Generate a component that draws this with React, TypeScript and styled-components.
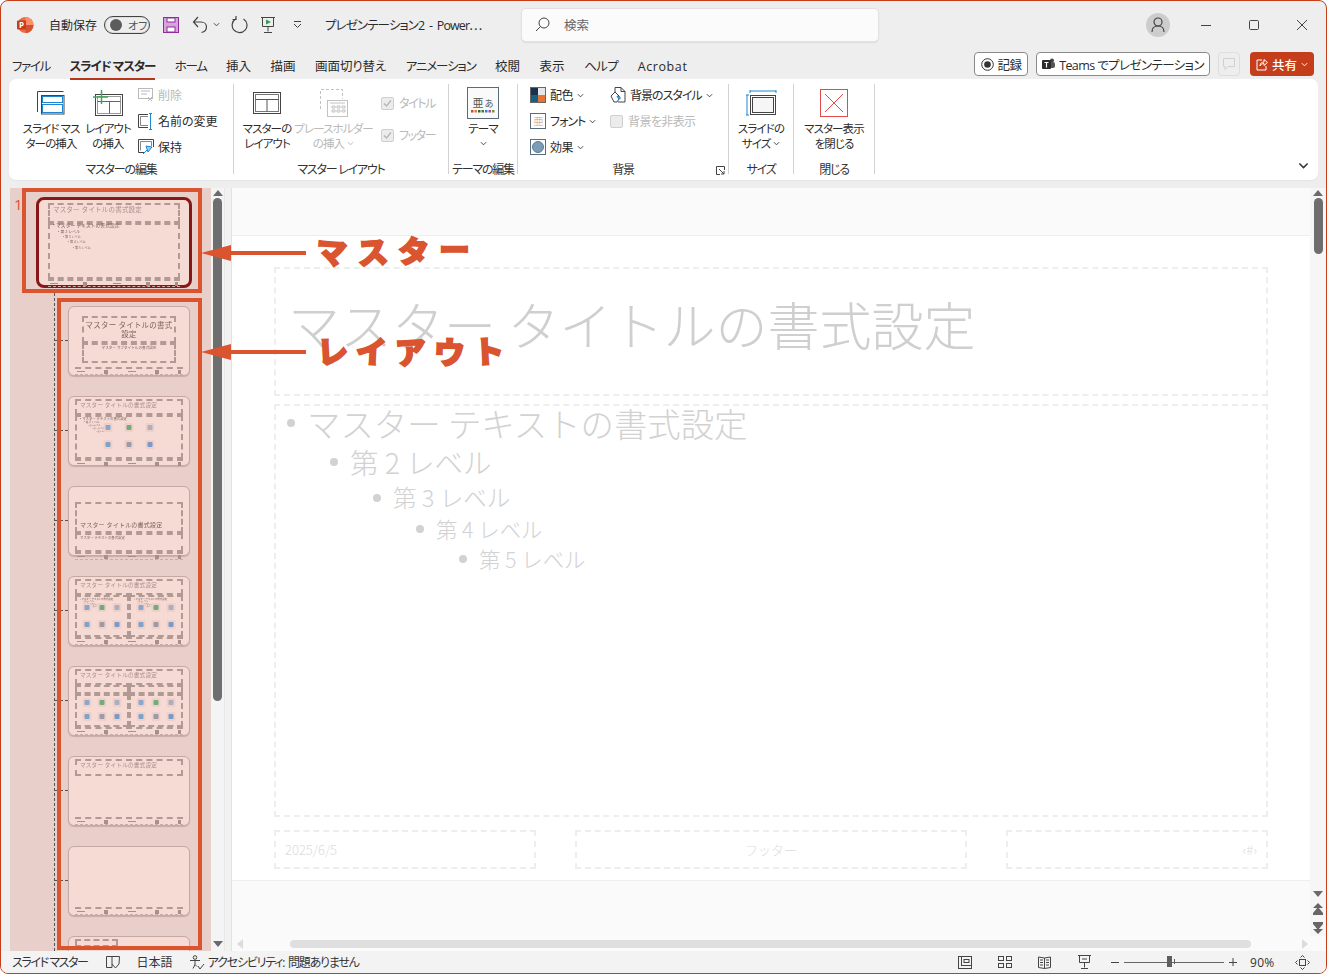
import React from "react";
import styled, { createGlobalStyle } from "styled-components";

const ACCENT = "#c43e1c";
const MARK = "#d9542f";
const INK = "#2b2b2b";
const FONT = `"Open Sans", "Noto Sans CJK JP", "Noto Sans", sans-serif`;

const Global = createGlobalStyle`
  html, body { margin: 0; width: 1327px; height: 974px; overflow: hidden; background: #fff; }
  * { box-sizing: border-box; }
  #root { width: 1327px; height: 974px; }
  svg { display: block; flex: none; }
`;

const Win = styled.div`
  position: relative;
  width: 1327px;
  height: 974px;
  display: flex;
  flex-direction: column;
  background: #eeeeee;
  border: 1px solid ${ACCENT};
  border-radius: 8px;
  overflow: hidden;
  font-family: ${FONT};
  font-feature-settings: "palt";
  font-size: 12.5px;
  color: ${INK};
`;

/* title bar */
const TitleBar = styled.div`
  height: 47px;
  flex: none;
  display: flex;
  align-items: center;
  padding-left: 15px;
`;
const AutoSave = styled.span`
  margin-left: 15px;
  font-size: 12px;
  width: 48px;
  white-space: nowrap;
`;
const Toggle = styled.div`
  margin-left: 7px;
  width: 46px;
  height: 18px;
  border: 1px solid #444;
  box-shadow: inset 0 0 0 1px #ddd;
  border-radius: 9px;
  display: flex;
  align-items: center;
  padding-left: 5px;
  gap: 6px;
  font-size: 11px;
  color: #555;
`;
const Knob = styled.i`
  width: 12px;
  height: 12px;
  border-radius: 50%;
  background: #5c5c5c;
`;
const QuickIcons = styled.div`
  margin-left: 13px;
  display: flex;
  align-items: center;
  width: 162px;
  gap: 0;
`;
const DocTitle = styled.span`
  font-size: 12.5px;
  letter-spacing: -0.9px;
  width: 197px;
  white-space: nowrap;
`;
const Search = styled.div`
  width: 356px;
  height: 32px;
  background: #fbfbfb;
  border-radius: 4px;
  box-shadow: 0 0 0 1px #e2e2e2, 0 1px 2px #bbb;
  display: flex;
  align-items: center;
  padding-left: 13px;
  gap: 14px;
  color: #666;
  font-size: 12.5px;
`;
const WinControls = styled.div`
  margin-left: auto;
  display: flex;
  align-items: center;
  padding-right: 18px;
`;
const Avatar = styled.div`
  width: 24px;
  height: 24px;
  border-radius: 50%;
  background: #cdcdcd;
  display: flex;
  align-items: center;
  justify-content: center;
  margin-right: -6px;
`;
const WinBtn = styled.div`
  width: 12px;
  height: 12px;
  margin-left: 36px;
`;

/* tabs */
const TabRow = styled.div`
  height: 31px;
  flex: none;
  display: flex;
  align-items: flex-start;
  padding: 10px 12px 0 11px;
`;
const Tabs = styled.div`
  display: flex;
  gap: 19.5px;
`;
const Tab = styled.span<{ $on?: boolean; $ls: number }>`
  position: relative;
  line-height: 18px;
  white-space: nowrap;
  font-size: 12.5px;
  letter-spacing: ${(p) => p.$ls}px;
  font-weight: ${(p) => (p.$on ? 700 : 400)};
  padding-bottom: 2px;
  border-bottom: 2px solid ${(p) => (p.$on ? "#b7371c" : "transparent")};
`;
const TabActions = styled.div`
  margin-left: auto;
  margin-top: -6px;
  display: flex;
  gap: 8px;
`;
const OutlineBtn = styled.div<{ $w: number }>`
  width: ${(p) => p.$w}px;
  height: 24px;
  background: #fff;
  border: 1px solid #8a8a8a;
  border-radius: 4px;
  display: flex;
  align-items: center;
  justify-content: center;
  gap: 4px;
  font-size: 12.5px;
  letter-spacing: -0.6px;
  white-space: nowrap;
`;
const CommentBtn = styled.div`
  width: 22px;
  height: 24px;
  border: 1px solid #dedede;
  border-radius: 4px;
  display: flex;
  align-items: center;
  justify-content: center;
`;
const ShareBtn = styled.div`
  margin-left: 2px;
  width: 64px;
  height: 24px;
  background: ${ACCENT};
  color: #fff;
  border-radius: 4px;
  display: flex;
  align-items: center;
  justify-content: center;
  gap: 4px;
  font-size: 12.5px;
  font-weight: 500;
`;

/* ribbon */
const Ribbon = styled.div`
  flex: none;
  height: 101px;
  margin: 0 8px;
  background: #fff;
  border-radius: 7px;
  display: flex;
  padding-top: 5px;
  box-shadow: 0 1px 1px #e4e4e4;
`;
const Group = styled.div<{ $w: number }>`
  position: relative;
  width: ${(p) => p.$w}px;
  height: 90px;
  border-right: 1px solid #d2d2d2;
  display: flex;
  flex-direction: column;
  flex: none;
`;
const GroupBody = styled.div<{ $pad?: number; $gap?: number }>`
  flex: 1;
  display: flex;
  padding-left: ${(p) => p.$pad ?? 0}px;
  gap: ${(p) => p.$gap ?? 0}px;
`;
const GroupName = styled.div`
  height: 14px;
  line-height: 14px;
  margin: -1px 0 -3px;
  text-align: center;
  font-size: 12px;
  letter-spacing: -1.2px;
  white-space: nowrap;
  color: #333;
`;
const Launcher = styled.div`
  position: absolute;
  right: 3px;
  bottom: -1px;
`;
const Large = styled.div<{ $w: number; $off?: boolean }>`
  width: ${(p) => p.$w}px;
  flex: none;
  display: flex;
  flex-direction: column;
  align-items: center;
  color: ${(p) => (p.$off ? "#b9b9b9" : INK)};
`;
const LargeIcon = styled.div`
  height: 38px;
  display: flex;
  align-items: center;
  justify-content: center;
`;
const LargeText = styled.div`
  font-size: 11.5px;
  letter-spacing: -0.9px;
  line-height: 15px;
  margin-top: -1px;
  text-align: center;
  white-space: nowrap;
  display: flex;
  flex-direction: column;
  align-items: center;
`;
const Line = styled.span<{ $h?: number }>`
  display: flex;
  align-items: center;
  gap: 3px;
  height: ${(p) => p.$h ?? 15}px;
`;
const Stack = styled.div<{ $w?: number; $top?: number; $left?: number; $gap?: number }>`
  display: flex;
  flex-direction: column;
  width: ${(p) => (p.$w ? `${p.$w}px` : "auto")};
  margin-top: ${(p) => p.$top ?? -2}px;
  margin-left: ${(p) => p.$left ?? 0}px;
  gap: ${(p) => p.$gap ?? 0}px;
`;
const Small = styled.div<{ $off?: boolean; $h?: number; $gap?: number; $ls?: number }>`
  height: ${(p) => p.$h ?? 26}px;
  display: flex;
  align-items: center;
  gap: ${(p) => p.$gap ?? 4}px;
  font-size: 12px;
  letter-spacing: ${(p) => p.$ls ?? 0}px;
  white-space: nowrap;
  color: ${(p) => (p.$off ? "#b9b9b9" : INK)};
`;
const CheckBox = styled.i`
  width: 13px;
  height: 13px;
  background: #ececec;
  border: 1px solid #cfcfcf;
  border-radius: 2px;
  display: flex;
  align-items: center;
  justify-content: center;
`;
const Collapse = styled.div`
  margin-left: auto;
  align-self: flex-end;
  padding: 0 9px 9px 0;
`;

/* main */
const Main = styled.div`
  flex: 1;
  min-height: 0;
  margin-top: 8px;
  display: flex;
  background: #f3f3f3;
`;
const LeftGutter = styled.div`
  width: 9px;
  background: #eeeeee;
  flex: none;
`;
const Pane = styled.div`
  width: 201px;
  flex: none;
  background: #e9cfc9;
  overflow: hidden;
`;
const MasterRow = styled.div`
  display: flex;
  padding: 9px 0 0 4px;
`;
const SlideNo = styled.span`
  width: 22px;
  font-size: 15px;
  line-height: 15px;
  color: ${MARK};
`;
const LayoutList = styled.div`
  margin: 5px 0 0 44px;
  border-left: 1px dashed #555;
  padding: 13px 0 0 13px;
  display: flex;
  flex-direction: column;
  gap: 20px;
`;
const ThumbCard = styled.div<{ $master?: boolean }>`
  position: relative;
  flex: none;
  width: ${(p) => (p.$master ? 156 : 122)}px;
  height: ${(p) => (p.$master ? 91 : 70)}px;
  background: #f6dad4;
  border: ${(p) => (p.$master ? "3px solid #861818" : "1px solid #c6a9a3")};
  border-radius: ${(p) => (p.$master ? 8 : 6)}px;
  padding: ${(p) => (p.$master ? "3px 9px 0" : "2px 6px 0")};
  display: flex;
  flex-direction: column;
  box-shadow: ${(p) => (p.$master ? "none" : "0 1px 1px #c9aca6")};
  &::before {
    content: ${(p) => (p.$master ? "none" : '""')};
    position: absolute;
    left: -14px;
    top: 33px;
    width: 13px;
    border-top: 1px dashed #555;
  }
`;
const Ph = styled.div<{
  $h?: number;
  $w?: number;
  $mx?: number;
  $mt?: number;
  $grow?: boolean;
  $center?: boolean;
  $end?: boolean;
}>`
  position: relative;
  flex: ${(p) => (p.$grow ? "1" : "none")};
  height: ${(p) => (p.$h ? `${p.$h}px` : "auto")};
  width: ${(p) => (p.$w ? `${p.$w}px` : "auto")};
  min-width: 0;
  margin: ${(p) => p.$mt ?? 0}px ${(p) => p.$mx ?? 0}px 0;
  border: 2px dashed #b19a94;
  padding: ${(p) => (p.$center ? "1px 0" : "1px 3px")};
  display: flex;
  flex-direction: column;
  justify-content: ${(p) => (p.$center ? "center" : p.$end ? "flex-end" : "flex-start")};
  align-items: ${(p) => (p.$center ? "center" : "stretch")};
  text-align: ${(p) => (p.$center ? "center" : "left")};
  filter: blur(0.3px);
`;
const MiniTitle = styled.div<{ $size?: number; $dark?: boolean; $wrap?: boolean }>`
  font-size: ${(p) => p.$size ?? 5.6}px;
  line-height: ${(p) => (p.$wrap ? 1.15 : 1.3)};
  white-space: ${(p) => (p.$wrap ? "normal" : "nowrap")};
  color: ${(p) => (p.$dark ? "#7d625c" : "#a98f89")};
  font-feature-settings: normal;
  letter-spacing: 0.2px;
`;
const MiniLines = styled.div<{ $scale?: number; $up?: number; $center?: boolean; $lead?: number }>`
  display: flex;
  flex-direction: column;
  gap: ${(p) => p.$lead ?? 0}px;
  line-height: 1.1;
  color: #7d625c;
  white-space: nowrap;
  font-feature-settings: normal;
  font-size: ${(p) => (p.$scale ?? 1) * 4}px;
  margin-top: ${(p) => p.$up ?? 0}px;
  text-align: ${(p) => (p.$center ? "center" : "left")};
`;
const MiniLine = styled.div<{ $lv: number; $base: number }>`
  padding-left: ${(p) => p.$lv * p.$base}px;
  font-size: ${(p) => (p.$lv === 0 ? 1 : p.$lv === 1 ? 0.8 : 0.65)}em;
`;
const BodyRow = styled.div<{ $grow?: boolean }>`
  display: flex;
  flex: ${(p) => (p.$grow ? "1" : "none")};
  min-height: 0;
  gap: 0;
`;
const BlobGrid = styled.div<{ $gx: number; $gy: number; $top: number }>`
  position: absolute;
  left: 50%;
  top: ${(p) => p.$top}px;
  transform: translateX(-50%);
  display: grid;
  grid-template-columns: repeat(3, auto);
  column-gap: ${(p) => p.$gx}px;
  row-gap: ${(p) => p.$gy}px;
`;
const Blob = styled.i<{ $c: string }>`
  display: block;
  width: 9px;
  height: 9px;
  border-radius: 2px;
  background: #f1cfc9;
  position: relative;
  &::after {
    content: "";
    position: absolute;
    inset: 2px;
    background: ${(p) => p.$c};
    border-radius: 1px;
  }
`;
const MiniFoot = styled.div`
  margin-top: auto;
  height: 8px;
  display: flex;
  flex: none;
  justify-content: space-between;
  align-items: center;
  border-top: 2px dashed #b19a94;
  border-bottom: 1px dashed #c7aea8;
  padding: 0 2px;
  filter: blur(0.3px);
`;
const FootDot = styled.i<{ $w: number }>`
  display: block;
  width: ${(p) => p.$w}px;
  height: ${(p) => (p.$w < 5 ? 4 : 1)}px;
  background: #a8908a;
`;

const PaneScroll = styled.div`
  width: 13px;
  flex: none;
  display: flex;
  flex-direction: column;
  align-items: center;
  padding: 0 0 2px;
  background: #f4f4f4;
`;
const Bar = styled.div<{ $h: number; $c?: string; $w?: number }>`
  width: ${(p) => p.$w ?? 9}px;
  height: ${(p) => p.$h}px;
  background: ${(p) => p.$c ?? "#6e6e6e"};
  border-radius: 5px;
  flex: none;
`;
const Spring = styled.div`
  flex: 1;
`;
const Gap = styled.span<{ $w?: number; $h?: number }>`
  display: block;
  flex: none;
  width: ${(p) => p.$w ?? 0}px;
  height: ${(p) => p.$h ?? 0}px;
`;
const Splitter = styled.div`
  width: 8px;
  flex: none;
  background: #f1f1f1;
  border-left: 1px solid #e8e8e8;
  border-right: 1px solid #e2e2e2;
`;
const EditArea = styled.div`
  flex: 1;
  min-width: 0;
  display: flex;
  flex-direction: column;
`;
const EditRow = styled.div`
  flex: 1;
  min-height: 0;
  display: flex;
`;
const Stage = styled.div`
  flex: 1;
  min-width: 0;
  display: flex;
  flex-direction: column;
  background: #fafafa;
  padding: 47px 0 0;
`;
const Slide = styled.div`
  height: 646px;
  background: #fff;
  border-top: 1px solid #eeeeee;
  border-bottom: 1px solid #eeeeee;
  padding: 31px 42px 0 42px;
  display: flex;
  flex-direction: column;
  font-feature-settings: normal;
  font-family: "Noto Sans CJK JP", sans-serif;
  font-weight: 300;
`;
const TitlePh = styled.div`
  height: 129px;
  border: 2px dashed #eeeeee;
  display: flex;
  align-items: center;
  padding: 0 0 16px 12px;
  font-size: 52px;
  color: #cfcfcf;
  white-space: nowrap;
`;
const BodyPh = styled.div`
  margin-top: 8px;
  height: 413px;
  border: 2px dashed #eeeeee;
  padding: 0 0 0 11px;
  display: flex;
  flex-direction: column;
  & > :first-child { margin-top: -3px; }
`;
const Level = styled.div<{ $i: number; $size: number; $h: number }>`
  display: flex;
  align-items: center;
  height: ${(p) => p.$h}px;
  margin-left: ${(p) => p.$i * 43}px;
  font-size: ${(p) => p.$size}px;
  line-height: 1.1;
  color: #d2d2d2;
  white-space: nowrap;
`;
const Bullet = styled.i`
  width: 8px;
  height: 8px;
  border-radius: 50%;
  background: #d2d2d2;
  margin-right: 12px;
  flex: none;
`;
const FootRow = styled.div`
  margin-top: 13px;
  display: grid;
  grid-template-columns: 262px 392px 262px;
  justify-content: space-between;
  height: 39px;
`;
const FootPh = styled.div<{ $align: string }>`
  border: 2px dashed #eeeeee;
  display: flex;
  align-items: center;
  justify-content: ${(p) => p.$align};
  padding: 0 9px;
  color: #dcdcdc;
  font-size: 13px;
`;
const StageVScroll = styled.div`
  width: 16px;
  flex: none;
  background: #f6f6f6;
  display: flex;
  flex-direction: column;
  align-items: center;
`;
const HScroll = styled.div`
  height: 15px;
  flex: none;
  display: flex;
  align-items: center;
  padding: 0 0 0 4px;
  background: #fafafa;
`;
const Status = styled.div`
  height: 22px;
  flex: none;
  display: flex;
  align-items: center;
  padding-left: 11px;
  background: #f3f3f3;
  font-size: 12px;
  color: #333;
  white-space: nowrap;
`;
const Kana = styled.span<{ $ls: number }>`
  letter-spacing: ${(p) => p.$ls}px;
`;
const StatusRight = styled.div`
  margin-left: auto;
  display: flex;
  align-items: center;
  padding-right: 16px;
`;
const ZoomValue = styled.span`
  width: 26px;
  letter-spacing: 0.3px;
`;
const Slider = styled.div`
  position: relative;
  width: 100px;
  height: 1px;
  background: #666;
  margin: 0 5px;
`;
const SliderKnob = styled.i<{ $w: number; $l: number; $h: number }>`
  position: absolute;
  left: ${(p) => p.$l}px;
  top: ${(p) => -p.$h / 2}px;
  width: ${(p) => p.$w}px;
  height: ${(p) => p.$h}px;
  background: #5f5f5f;
`;

/* annotations drawn over the screenshot */
const Frame = styled.div<{ $x: number; $y: number; $w: number; $h: number }>`
  position: absolute;
  left: ${(p) => p.$x}px;
  top: ${(p) => p.$y}px;
  width: ${(p) => p.$w}px;
  height: ${(p) => p.$h}px;
  border: 4px solid ${MARK};
`;
const ArrowWrap = styled.div<{ $y: number }>`
  position: absolute;
  left: 200px;
  top: ${(p) => p.$y}px;
`;
const Callout = styled.div<{ $x: number; $y: number; $gap: number }>`
  position: absolute;
  left: ${(p) => p.$x}px;
  top: ${(p) => p.$y}px;
  display: flex;
  gap: ${(p) => p.$gap}px;
  font-family: "Noto Sans CJK JP", sans-serif;
  font-weight: 900;
  font-size: 31px;
  line-height: 36px;
  color: ${MARK};
  -webkit-text-stroke: 1.6px ${MARK};
  font-feature-settings: normal;
`;
const Glyph = styled.span<{ $r: number; $dy?: number }>`
  display: block;
  transform: translateY(${(p) => p.$dy ?? 0}px) rotate(${(p) => p.$r}deg);
`;

/* icons */
const Chev = ({ c = "#444", s = 7 }: { c?: string; s?: number }) => (
  <svg width={s} height={s} viewBox="0 0 8 8"><path d="M1 2.5 4 5.5 7 2.5" fill="none" stroke={c} strokeWidth="1.1" /></svg>
);
const Stroke = ({ w, h, children }: { w: number; h: number; children: React.ReactNode }) => (
  <svg width={w} height={h} viewBox={`0 0 ${w} ${h}`} fill="none" stroke="#444" strokeWidth="1">{children}</svg>
);
const PptLogo = () => (
  <svg width="18" height="18" viewBox="0 0 18 18">
    <circle cx="9.5" cy="9" r="8" fill="#ed6c47" />
    <path d="M9.5 1a8 8 0 0 1 8 8h-8z" fill="#ff8f6b" />
    <path d="M9.5 9h8a8 8 0 0 1-8 8z" fill="#d35230" />
    <rect x="1" y="4.5" width="9" height="9" rx="1" fill="#c43e1c" />
    <text x="5.5" y="12" fontSize="8" fontWeight="700" fill="#fff" textAnchor="middle" fontFamily="Open Sans">P</text>
  </svg>
);
const SaveIcon = () => (
  <svg width="16" height="16" viewBox="0 0 16 16">
    <rect x=".5" y=".5" width="15" height="15" fill="#d9a3df" stroke="#8e2f9c" />
    <rect x="4" y="1" width="8" height="4" fill="#fff" stroke="#8e2f9c" />
    <rect x="4" y="10" width="8" height="5" fill="#fff" stroke="#8e2f9c" />
  </svg>
);
const UndoIcon = () => (
  <Stroke w={16} h={18}>
    <path d="M6 1 1.500 6 6 11M1.500 6H9c3 0 5.500 2 5.500 5s-2.500 5-5 5.500" strokeWidth="1.2" />
  </Stroke>
);
const RedoIcon = () => (
  <Stroke w={17} h={18}>
    <path d="M5 2.800a7.400 7.400 0 1 0 7.500 .2" strokeWidth="1.2" />
    <path d="M5 0v3.500H1.500" strokeWidth="1.2" />
  </Stroke>
);
const PresentIcon = () => (
  <Stroke w={16} h={18}>
    <path d="M1 1.5h14M2.5 1.500v9h11v-9M8 10.500v5M4 16.500h8" />
    <path d="M6 3.500l5 2.500-5 2.500z" fill="#2e9e4f" stroke="none" />
  </Stroke>
);
const CustomizeIcon = () => (
  <Stroke w={9} h={9}>
    <path d="M1 1.500h7M1 4l3.500 3.500L8 4" />
  </Stroke>
);
const SearchIcon = () => (
  <Stroke w={15} h={15}>
    <circle cx="9" cy="6" r="5" />
    <path d="M5.500 9.500 1 14" />
  </Stroke>
);
const UserIcon = () => (
  <Stroke w={14} h={16}>
    <circle cx="7" cy="5" r="4" strokeWidth="1.2" />
    <path d="M1 15c0-4 2-6 6-6s6 2 6 6" strokeWidth="1.2" />
  </Stroke>
);
const RecIcon = () => (
  <svg width="13" height="13" viewBox="0 0 13 13">
    <circle cx="6.500" cy="6.500" r="5.800" fill="none" stroke="#333" />
    <circle cx="6.500" cy="6.500" r="3.300" fill="#333" />
  </svg>
);
const TeamsIcon = () => (
  <svg width="13" height="12" viewBox="0 0 13 12">
    <circle cx="10" cy="2.500" r="2" fill="#444" />
    <rect x="7" y="4" width="6" height="6" rx="2" fill="#555" />
    <rect x="0" y="2" width="9" height="9" rx="1" fill="#2b2b2b" />
    <path d="M2.500 4.500h4M4.500 4.500v5" stroke="#fff" strokeWidth="1.200" />
  </svg>
);
const BubbleIcon = () => (
  <svg width="12" height="12" viewBox="0 0 12 12" fill="none" stroke="#d0d0d0">
    <path d="M.5.500h11v8H5l-3 3v-3H.5z" />
  </svg>
);
const ShareIcon = () => (
  <svg width="12" height="13" viewBox="0 0 12 13" fill="none" stroke="#fff">
    <path d="M6 2H1v10h9V8M4 8c0-3 2-4 4-4V1.500l3.500 3-3.500 3V5.500C6 5.500 5 6.500 4 8z" />
  </svg>
);

const SlideMasterIcon = () => (
  <Stroke w={28} h={24}>
    <path d="M.5 21V.5h26" />
    <rect x="4.500" y="4.500" width="22.500" height="18.500" />
    <rect x="5.500" y="5.500" width="20" height="6" stroke="#1f86d0" />
    <rect x="5.500" y="13.500" width="20" height="8" stroke="#1f86d0" />
  </Stroke>
);
const LayoutInsIcon = () => (
  <svg width="30" height="27" viewBox="0 0 30 27" fill="none" stroke="#444">
    <rect x="2.500" y="4.500" width="27" height="21" />
    <rect x="4.500" y="6.500" width="23" height="17" stroke="#999" />
    <path d="M4.500 11.500h23M16.500 11.500v12" stroke="#666" />
    <path d="M8.500 0v14M0 7h15" stroke="#43a55a" strokeWidth="1.500" />
  </svg>
);
const DeleteIcon = () => (
  <svg width="16" height="16" viewBox="0 0 16 16" fill="none" stroke="#b9b9b9">
    <rect x=".5" y="1.500" width="14" height="10" />
    <path d="M3 4h9M3 7h6" />
    <path d="M10 10l4 4M14 10l-4 4" />
  </svg>
);
const RenameIcon = () => (
  <svg width="16" height="17" viewBox="0 0 16 17" fill="none" stroke="#444">
    <path d="M10 1.500H.5v13H10" />
    <path d="M10 3.500H2.500v9H10" stroke="#888" />
    <path d="M11 .5h3M11 16.500h3M12.500 1v15" stroke="#1f86d0" />
  </svg>
);
const KeepIcon = () => (
  <svg width="16" height="16" viewBox="0 0 16 16" fill="none" stroke="#444">
    <path d="M6 13.500H.5V.5h15V8" />
    <path d="M2.500 11.500v-9h11V7" stroke="#888" />
    <path d="M5 15l4-4M8 7l6 1-4 5z" stroke="#1f86d0" fill="#9fd0f0" />
  </svg>
);
const MasterLayoutIcon = () => (
  <Stroke w={28} h={22}>
    <rect x=".5" y=".5" width="27" height="21" strokeWidth="1" />
    <rect x="2.500" y="2.500" width="23" height="17" stroke="#777" />
    <path d="M2.500 7.500h23M14 7.500v12" stroke="#555" />
  </Stroke>
);
const PlaceholderIcon = () => (
  <svg width="28" height="28" viewBox="0 0 28 28" fill="none" stroke="#c2c2c2">
    <path d="M.5 20V.5H22.500V10" strokeDasharray="3 2" />
    <rect x="7.500" y="11.500" width="20" height="16" fill="#fff" />
    <path d="M10 14h15" />
    <path d="M12 17h3v2h-3zM17 17h3v2h-3zM22 17h3v2h-3zM12 21h3v2h-3zM17 21h3v2h-3zM22 21h3v2h-3z" />
  </svg>
);
const Tick = () => (
  <svg width="9" height="9" viewBox="0 0 9 9"><path d="M1 4.500 3.500 7 8 1.500" fill="none" stroke="#b5b5b5" strokeWidth="1.300" /></svg>
);
const ThemeIcon = () => (
  <svg width="32" height="32" viewBox="0 0 32 32">
    <rect x=".5" y=".5" width="31" height="31" fill="#fafafa" stroke="#5a6b7c" />
    <text x="11" y="20" fontSize="11" textAnchor="middle" fill="#555" fontFamily="Noto Sans CJK JP">亜</text>
    <text x="22" y="20" fontSize="9" textAnchor="middle" fill="#555" fontFamily="Noto Sans CJK JP">あ</text>
    {["#c0532b", "#e8772e", "#1f6d45", "#3a7a3a", "#1f86d0", "#a54aa5", "#6a9a2e"].map((c, i) => (
      <rect key={c} x={4 + i * 3.500} y="23" width="2.500" height="2.500" fill={c} />
    ))}
  </svg>
);
const ColorIcon = () => (
  <svg width="16" height="16" viewBox="0 0 16 16">
    <rect width="8" height="8" fill="#16324f" />
    <rect x="8" width="8" height="8" fill="#e7e6e6" />
    <rect y="8" width="8" height="8" fill="#156082" />
    <rect x="8" y="8" width="8" height="8" fill="#e97132" />
    <rect x=".5" y=".5" width="15" height="15" fill="none" stroke="#666" />
  </svg>
);
const FontIcon = () => (
  <svg width="16" height="16" viewBox="0 0 16 16">
    <rect x=".5" y=".5" width="15" height="15" fill="#fff" stroke="#5a6b7c" />
    <text x="8" y="12" fontSize="10.500" fontWeight="300" textAnchor="middle" fill="#c99a78" fontFamily="Noto Sans CJK JP">亜</text>
  </svg>
);
const EffectIcon = () => (
  <svg width="16" height="16" viewBox="0 0 16 16">
    <rect x=".5" y=".5" width="15" height="15" fill="#fff" stroke="#5a6b7c" />
    <circle cx="8" cy="8" r="5.500" fill="#7d9cb5" stroke="#5a7c96" />
  </svg>
);
const BgStyleIcon = () => (
  <svg width="16" height="17" viewBox="0 0 16 17" fill="none" stroke="#444">
    <path d="M5 6V.5h6l4 4V15H8" />
    <path d="M11 .5v4h4" />
    <path d="M1 9l4-4 4 4v3l-2 3H4z" fill="#fff" />
    <path d="M7 9l3 1v2l-2-1z" fill="#5aa6dc" stroke="#1f86d0" />
  </svg>
);
const SizeIcon = () => (
  <svg width="31" height="27" viewBox="0 0 31 27" fill="none" stroke="#444">
    <path d="M4 1h26M4 0v3M30 0v3M1 5v20M0 5h3M0 25h3" stroke="#1f86d0" />
    <rect x="4.500" y="5.500" width="25" height="19" />
    <rect x="6.500" y="7.500" width="21" height="15" fill="#f6f6f6" />
  </svg>
);
const CloseMasterIcon = () => (
  <svg width="28" height="28" viewBox="0 0 28 28" fill="none" stroke="#e24b4b">
    <rect x=".5" y=".5" width="27" height="27" />
    <path d="M5 5l18 18M23 5 5 23" />
  </svg>
);
const LauncherIcon = () => (
  <svg width="9" height="9" viewBox="0 0 9 9" fill="none" stroke="#444">
    <path d="M8.500 4V.5h-8v8H4M3 3l5 5M5 8h3V5" />
  </svg>
);
const Tri = ({ d, c = "#6a6a6a" }: { d: "up" | "down" | "left" | "right"; c?: string }) => {
  const pts = { up: "0,8 5,2 10,8", down: "0,2 5,8 10,2", left: "7,0 1,5 7,10", right: "2,0 8,5 2,10" }[d];
  return (
    <svg width="10" height="10" viewBox="0 0 10 10"><polygon points={pts} fill={c} /></svg>
  );
};
const PageUp = () => (
  <svg width="10" height="12" viewBox="0 0 10 12">
    <polygon points="5,0 10,5 0,5" fill="#666" />
    <polygon points="5,4 10,10 0,10" fill="#666" />
    <rect y="10" width="10" height="2" fill="#666" />
  </svg>
);
const PageDown = () => (
  <svg width="10" height="12" viewBox="0 0 10 12">
    <rect width="10" height="2" fill="#666" />
    <polygon points="0,2 10,2 5,8" fill="#666" />
    <polygon points="0,7 10,7 5,12" fill="#666" />
  </svg>
);
const BookIcon = () => (
  <Stroke w={14} h={14}>
    <path d="M.5 1.500h5.500v11H.5zM6 1.500h7.500L13 9l-3.500 4L6 9" />
  </Stroke>
);
const AccessIcon = () => (
  <Stroke w={16} h={15}>
    <circle cx="6" cy="2.500" r="1.800" />
    <path d="M1 5.500h10M6 5.500v4l-2 4M6 9.500l2 2" />
    <path d="M9 11l2 3 4-5" />
  </Stroke>
);
const NormalViewIcon = () => (
  <Stroke w={14} h={13}>
    <rect x=".5" y=".5" width="13" height="12" />
    <path d="M3.500 10V.5M3.500 9.500h10" />
    <rect x="6" y="3.500" width="5" height="3" />
  </Stroke>
);
const SorterIcon = () => (
  <Stroke w={14} h={12}>
    <rect x=".5" y=".5" width="5" height="4" />
    <rect x="8.500" y=".5" width="5" height="4" />
    <rect x=".5" y="7.500" width="5" height="4" />
    <rect x="8.500" y="7.500" width="5" height="4" />
  </Stroke>
);
const ReadIcon = () => (
  <Stroke w={13} h={13}>
    <path d="M.5 1 6.500 2l6-1v10.500l-6 1-6-1zM6.500 2v10.500M2 4h3M2 6.500h3M2 9h3M8 4h3M8 6.500h3M8 9h3" />
  </Stroke>
);
const SlideshowIcon = () => (
  <Stroke w={13} h={14}>
    <path d="M0 .5h13M1.500.5v7h10v-7M6.500 7.500v5M3 13.500h7M4 4h5" />
  </Stroke>
);
const FitIcon = () => (
  <Stroke w={15} h={15}>
    <rect x="4.500" y="4.500" width="6" height="6" />
    <path d="M2.500 5.500.5 7.500l2 2M12.500 5.500l2 2-2 2M5.500 2.500l2-2 2 2M5.500 12.500l2 2 2-2" />
  </Stroke>
);
const Arrow = () => (
  <svg width="105" height="18" viewBox="0 0 105 18">
    <polygon points="0,9 30,1 30,17" fill={MARK} />
    <rect x="29" y="7" width="76" height="4" fill={MARK} />
  </svg>
);

const TABS = [
  { label: "ファイル", ls: -1.3 },
  { label: "スライド マスター", ls: -1.1, on: true },
  { label: "ホーム", ls: -1.3 },
  { label: "挿入", ls: 0 },
  { label: "描画", ls: 0 },
  { label: "画面切り替え", ls: -0.1 },
  { label: "アニメーション", ls: -1.15 },
  { label: "校閲", ls: 0 },
  { label: "表示", ls: 0 },
  { label: "ヘルプ", ls: -0.6 },
  { label: "Acrobat", ls: 0.6 },
];

/* small slide thumbnails */
const TITLE = "マスター タイトルの書式設定";
const BLOBS = ["#8aa6cb", "#6fae7c", "#aab0bd", "#7ea3c9", "#9a9aa8", "#7a9acb"];
const LINES = ["マスター テキストの書式設定", "第 2 レベル", "第 3 レベル", "第 4 レベル", "第 5 レベル"];

const Blobs = ({ gx, gy, top }: { gx: number; gy: number; top: number }) => (
  <BlobGrid $gx={gx} $gy={gy} $top={top}>
    {BLOBS.map((c) => <Blob key={c} $c={c} />)}
  </BlobGrid>
);
const TextLines = ({ scale = 1, base = 5, up = 0, lead = 0 }: { scale?: number; base?: number; up?: number; lead?: number }) => (
  <MiniLines $scale={scale} $up={up} $lead={lead}>
    {LINES.map((t, i) => (
      <MiniLine key={t} $lv={i} $base={base}>• {t}</MiniLine>
    ))}
  </MiniLines>
);
const Foot = () => (
  <MiniFoot>
    <FootDot $w={8} />
    <FootDot $w={4} />
    <FootDot $w={8} />
    <FootDot $w={4} />
    <FootDot $w={3} />
  </MiniFoot>
);

const layouts: React.ReactNode[] = [
  <>
    <Ph $h={27} $mx={7} $mt={7} $center><MiniTitle $size={7.500} $dark $wrap>{TITLE}</MiniTitle></Ph>
    <Ph $h={20} $mx={7}><MiniLines $scale={0.9} $center>マスター サブタイトルの書式設定</MiniLines></Ph>
    <Foot />
  </>,
  <>
    <Ph $h={16}><MiniTitle>{TITLE}</MiniTitle></Ph>
    <Ph $h={44}><TextLines scale={0.85} base={4} up={-1} lead={0.6} /><Blobs gx={12} gy={8} top={6} /></Ph>
    <Foot />
  </>,
  <>
    <Ph $h={31} $mt={13} $end><MiniTitle $size={6} $dark>{TITLE}</MiniTitle></Ph>
    <Ph $h={19}><MiniLines $scale={0.85}>マスター テキストの書式設定</MiniLines></Ph>
    <Foot />
  </>,
  <>
    <Ph $h={16}><MiniTitle>{TITLE}</MiniTitle></Ph>
    <BodyRow $grow>
      <Ph $grow><TextLines scale={0.6} base={3} /><Blobs gx={6} gy={8} top={6} /></Ph>
      <Ph $grow><TextLines scale={0.6} base={3} /><Blobs gx={6} gy={8} top={6} /></Ph>
    </BodyRow>
    <Foot />
  </>,
  <>
    <Ph $h={16}><MiniTitle>{TITLE}</MiniTitle></Ph>
    <BodyRow><Ph $grow $h={9} /><Ph $grow $h={9} /></BodyRow>
    <BodyRow $grow>
      <Ph $grow><Blobs gx={6} gy={5} top={2} /></Ph>
      <Ph $grow><Blobs gx={6} gy={5} top={2} /></Ph>
    </BodyRow>
    <Foot />
  </>,
  <>
    <Ph $h={17}><MiniTitle>{TITLE}</MiniTitle></Ph>
    <Foot />
  </>,
  <Foot />,
  <Ph $h={8} $w={43} />,
];

export default function App() {
  return (
    <Win>
      <Global />
      <TitleBar>
        <PptLogo />
        <AutoSave>自動保存</AutoSave>
        <Toggle><Knob />オフ</Toggle>
        <QuickIcons>
          <SaveIcon />
          <Gap $w={13} />
          <UndoIcon />
          <Gap $w={5} />
          <Chev />
          <Gap $w={11} />
          <RedoIcon />
          <Gap $w={12} />
          <PresentIcon />
          <Gap $w={17} />
          <CustomizeIcon />
        </QuickIcons>
        <DocTitle>プレゼンテーション2 &nbsp;-&nbsp; Power⋯</DocTitle>
        <Search><SearchIcon />検索</Search>
        <WinControls>
          <Avatar><UserIcon /></Avatar>
          <WinBtn><Stroke w={12} h={12}><path d="M1 6.500h10" /></Stroke></WinBtn>
          <WinBtn><Stroke w={12} h={12}><rect x="1.500" y="1.500" width="9" height="9" rx="1" /></Stroke></WinBtn>
          <WinBtn><Stroke w={12} h={12}><path d="M1 1l10 10M11 1 1 11" /></Stroke></WinBtn>
        </WinControls>
      </TitleBar>

      <TabRow>
        <Tabs>
          {TABS.map((t) => (
            <Tab key={t.label} $on={t.on} $ls={t.ls}>{t.label}</Tab>
          ))}
        </Tabs>
        <TabActions>
          <OutlineBtn $w={54}><RecIcon />記録</OutlineBtn>
          <OutlineBtn $w={174}><TeamsIcon />Teams でプレゼンテーション</OutlineBtn>
          <CommentBtn><BubbleIcon /></CommentBtn>
          <ShareBtn><ShareIcon />共有<Chev c="#fff" /></ShareBtn>
        </TabActions>
      </TabRow>

      <Ribbon>
        <Group $w={225}>
          <GroupBody $pad={9}>
            <Large $w={66}>
              <LargeIcon><SlideMasterIcon /></LargeIcon>
              <LargeText><span>スライド マス</span><span>ターの挿入</span></LargeText>
            </Large>
            <Large $w={48}>
              <LargeIcon><LayoutInsIcon /></LargeIcon>
              <LargeText><span>レイアウト</span><span>の挿入</span></LargeText>
            </Large>
            <Stack $left={6}>
              <Small $off><DeleteIcon />削除</Small>
              <Small><RenameIcon />名前の変更</Small>
              <Small><KeepIcon />保持</Small>
            </Stack>
          </GroupBody>
          <GroupName>マスターの編集</GroupName>
        </Group>
        <Group $w={215}>
          <GroupBody $pad={9}>
            <Large $w={48}>
              <LargeIcon><MasterLayoutIcon /></LargeIcon>
              <LargeText><span>マスターの</span><span>レイアウト</span></LargeText>
            </Large>
            <Large $w={85} $off>
              <LargeIcon><PlaceholderIcon /></LargeIcon>
              <LargeText><span>プレースホルダー</span><Line>の挿入<Chev c="#b9b9b9" /></Line></LargeText>
            </Large>
            <Stack $top={7} $left={5} $gap={8}>
              <Small $off $h={24} $gap={5} $ls={-1.400}><CheckBox><Tick /></CheckBox>タイトル</Small>
              <Small $off $h={24} $gap={5} $ls={-1.400}><CheckBox><Tick /></CheckBox>フッター</Small>
            </Stack>
          </GroupBody>
          <GroupName>マスター レイアウト</GroupName>
        </Group>
        <Group $w={69}>
          <GroupBody>
            <Large $w={68}>
              <LargeIcon><ThemeIcon /></LargeIcon>
              <LargeText><span>テーマ</span><Line><Chev /></Line></LargeText>
            </Large>
          </GroupBody>
          <GroupName>テーマの編集</GroupName>
        </Group>
        <Group $w={211}>
          <GroupBody $pad={12}>
            <Stack $w={80}>
              <Small $ls={-0.600}><ColorIcon />配色<Chev /></Small>
              <Small $ls={-1}><FontIcon />フォント<Chev /></Small>
              <Small $ls={-0.600}><EffectIcon />効果<Chev /></Small>
            </Stack>
            <Stack>
              <Small $ls={-1}><BgStyleIcon />背景のスタイル<Chev /></Small>
              <Small $off $gap={5} $ls={-0.600}><CheckBox />背景を非表示</Small>
            </Stack>
          </GroupBody>
          <GroupName>背景</GroupName>
          <Launcher><LauncherIcon /></Launcher>
        </Group>
        <Group $w={65}>
          <GroupBody>
            <Large $w={64}>
              <LargeIcon><SizeIcon /></LargeIcon>
              <LargeText><span>スライドの</span><Line>サイズ<Chev /></Line></LargeText>
            </Large>
          </GroupBody>
          <GroupName>サイズ</GroupName>
        </Group>
        <Group $w={81}>
          <GroupBody>
            <Large $w={80}>
              <LargeIcon><CloseMasterIcon /></LargeIcon>
              <LargeText><span>マスター表示</span><span>を閉じる</span></LargeText>
            </Large>
          </GroupBody>
          <GroupName>閉じる</GroupName>
        </Group>
        <Collapse><Chev s={11} c="#333" /></Collapse>
      </Ribbon>

      <Main>
        <LeftGutter />
        <Pane>
          <MasterRow>
            <SlideNo>1</SlideNo>
            <ThumbCard $master>
              <Ph $h={20}><MiniTitle $size={6.500}>{TITLE}</MiniTitle></Ph>
              <Ph $h={56}><TextLines scale={1.200} base={5} up={-3} lead={1.800} /></Ph>
              <Foot />
            </ThumbCard>
          </MasterRow>
          <LayoutList>
            {layouts.map((content, i) => (
              <ThumbCard key={i}>{content}</ThumbCard>
            ))}
          </LayoutList>
        </Pane>
        <PaneScroll>
          <Tri d="up" />
          <Bar $h={503} />
          <Spring />
          <Tri d="down" />
        </PaneScroll>
        <Splitter />
        <EditArea>
          <EditRow>
            <Stage>
              <Slide>
                <TitlePh>{TITLE}</TitlePh>
                <BodyPh>
                  <Level $i={0} $size={33.400} $h={40}><Bullet />マスター テキストの書式設定</Level>
                  <Level $i={1} $size={28.400} $h={38}><Bullet />第 2 レベル</Level>
                  <Level $i={2} $size={23.600} $h={33}><Bullet />第 3 レベル</Level>
                  <Level $i={3} $size={21.400} $h={30}><Bullet />第 4 レベル</Level>
                  <Level $i={4} $size={21.400} $h={29}><Bullet />第 5 レベル</Level>
                </BodyPh>
                <FootRow>
                  <FootPh $align="flex-start">2025/6/5</FootPh>
                  <FootPh $align="center">フッター</FootPh>
                  <FootPh $align="flex-end">‹#›</FootPh>
                </FootRow>
              </Slide>
            </Stage>
            <StageVScroll>
              <Tri d="up" />
              <Bar $h={56} />
              <Spring />
              <Tri d="down" />
              <Gap $h={4} />
              <PageUp />
              <Gap $h={7} />
              <PageDown />
              <Gap $h={2} />
            </StageVScroll>
          </EditRow>
          <HScroll>
            <Tri d="left" c="#dcdcdc" />
            <Gap $w={44} />
            <Bar $w={961} $h={8} $c="#dfdfdf" />
            <Spring />
            <Tri d="right" c="#dcdcdc" />
            <Gap $w={16} />
          </HScroll>
        </EditArea>
      </Main>

      <Status>
        <Kana $ls={-1.400}>スライド マスター</Kana>
        <Gap $w={18} />
        <BookIcon />
        <Gap $w={17} />
        日本語
        <Gap $w={16} />
        <AccessIcon />
        <Gap $w={3} />
        <Kana $ls={-1.200}>アクセシビリティ:&nbsp; 問題ありません</Kana>
        <StatusRight>
          <NormalViewIcon />
          <Gap $w={26} />
          <SorterIcon />
          <Gap $w={26} />
          <ReadIcon />
          <Gap $w={27} />
          <SlideshowIcon />
          <Gap $w={20} />
          <Stroke w={8} h={8}><path d="M0 4.500h8" /></Stroke>
          <Slider>
            <SliderKnob $l={43} $w={5} $h={11} />
            <SliderKnob $l={50} $w={1} $h={5} />
          </Slider>
          <Stroke w={8} h={8}><path d="M0 4.500h8M4 0v8" /></Stroke>
          <Gap $w={13} />
          <ZoomValue>90%</ZoomValue>
          <Gap $w={19} />
          <FitIcon />
        </StatusRight>
      </Status>

      <Frame $x={21} $y={187} $w={180} $h={105} />
      <Frame $x={56} $y={297} $w={145} $h={652} />
      <ArrowWrap $y={243}><Arrow /></ArrowWrap>
      <ArrowWrap $y={342}><Arrow /></ArrowWrap>
      <Callout $x={315} $y={232} $gap={10}>
        <Glyph $r={4}>マ</Glyph>
        <Glyph $r={-4}>ス</Glyph>
        <Glyph $r={4} $dy={-1}>タ</Glyph>
        <Glyph $r={0} $dy={-3}>ー</Glyph>
      </Callout>
      <Callout $x={316} $y={331} $gap={8}>
        <Glyph $r={-3}>レ</Glyph>
        <Glyph $r={3}>イ</Glyph>
        <Glyph $r={-4} $dy={1}>ア</Glyph>
        <Glyph $r={2} $dy={1}>ウ</Glyph>
        <Glyph $r={-3}>ト</Glyph>
      </Callout>
    </Win>
  );
}
